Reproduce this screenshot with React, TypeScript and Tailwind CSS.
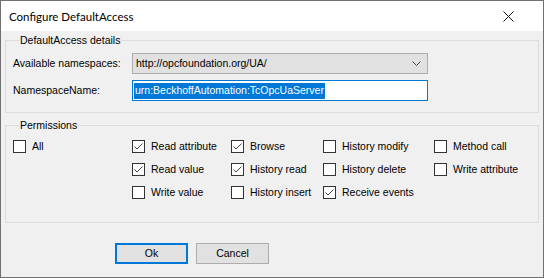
import React from "react";

const perms: { label: string; checked: boolean; col: number; row: number }[] = [
  { label: "All", checked: false, col: 1, row: 1 },
  { label: "Read attribute", checked: true, col: 2, row: 1 },
  { label: "Read value", checked: true, col: 2, row: 2 },
  { label: "Write value", checked: false, col: 2, row: 3 },
  { label: "Browse", checked: true, col: 3, row: 1 },
  { label: "History read", checked: true, col: 3, row: 2 },
  { label: "History insert", checked: false, col: 3, row: 3 },
  { label: "History modify", checked: false, col: 4, row: 1 },
  { label: "History delete", checked: false, col: 4, row: 2 },
  { label: "Receive events", checked: true, col: 4, row: 3 },
  { label: "Method call", checked: false, col: 5, row: 1 },
  { label: "Write attribute", checked: false, col: 5, row: 2 },
];

const colClass = ["", "col-start-1", "col-start-2", "col-start-3", "col-start-4", "col-start-5"];
const rowClass = ["", "row-start-1", "row-start-2", "row-start-3"];

function CheckBox({ label, checked }: { label: string; checked: boolean }) {
  return (
    <label className="flex items-center gap-[6px] h-[23px]">
      <span className="w-[13px] h-[13px] border border-[#333333] bg-white flex items-center justify-center">
        {checked && (
          <svg width="11" height="11" viewBox="0 0 11 11">
            <polyline points="1.5,5.5 4,8 9.5,2.5" fill="none" stroke="#444" strokeWidth="1" />
          </svg>
        )}
      </span>
      <span>{label}</span>
    </label>
  );
}

export default function App() {
  return (
    <div
      className="w-[544px] h-[278px] border border-[#707070] flex flex-col text-[10.5px] leading-[13px] text-black"
      style={{ fontFamily: '"Liberation Sans", Arial, sans-serif' }}
    >
      <div className="h-[30px] bg-white flex items-center justify-between pl-[8px] pr-[29px]">
        <span className="text-[11.5px]" style={{ fontFamily: 'Lato, "Noto Sans", sans-serif' }}>
          Configure DefaultAccess
        </span>
        <svg width="11" height="11" viewBox="0 0 11 11">
          <path d="M0.5 0.5 L10.5 10.5 M10.5 0.5 L0.5 10.5" stroke="#111" strokeWidth="1" />
        </svg>
      </div>

      <div className="flex-1 bg-[#f0f0f0] px-[4px] flex flex-col">
        <fieldset className="mt-[3px] border border-[#dcdcdc] pl-[7px] pr-[6px] pt-[6px] pb-[11px]">
          <legend className="ml-[6px] px-[1px] leading-[13px]">DefaultAccess details</legend>
          <div className="flex flex-col gap-[6px]">
            <div className="flex items-center h-[21px]">
              <span className="w-[119px]">Available namespaces:</span>
              <div className="w-[296px] h-[21px] border border-[#adadad] bg-[#e1e1e1] flex items-center justify-between pl-[3px] pr-[6px]">
                <span>http://opcfoundation.org/UA/</span>
                <svg width="9" height="5" viewBox="0 0 9 5">
                  <polyline points="0.5,0.5 4.5,4.5 8.5,0.5" fill="none" stroke="#444" strokeWidth="1" />
                </svg>
              </div>
            </div>
            <div className="flex items-center h-[21px]">
              <span className="w-[119px]">NamespaceName:</span>
              <div className="w-[296px] h-[21px] border border-[#0078d7] bg-white flex items-center pl-[1px]">
                <span className="bg-[#0078d7] text-white h-[16px] flex items-center pl-[1px] pr-[1px]">
                  urn:BeckhoffAutomation:TcOpcUaServer
                </span>
              </div>
            </div>
          </div>
        </fieldset>

        <fieldset className="mt-[6px] border border-[#dcdcdc] pl-[7px] pt-[3px] pb-[18px]">
          <legend className="ml-[6px] px-[1px] leading-[13px]">Permissions</legend>
          <div className="grid grid-cols-[119px_99px_92px_111px_1fr] grid-rows-[23px_23px_23px]">
            {perms.map((p) => (
              <div key={p.label} className={`${colClass[p.col]} ${rowClass[p.row]}`}>
                <CheckBox label={p.label} checked={p.checked} />
              </div>
            ))}
          </div>
        </fieldset>

        <div className="mt-[20px] ml-[110px] flex gap-[8px]">
          <button className="w-[73px] h-[21px] border-2 border-[#0078d7] bg-[#e1e1e1] flex items-center justify-center">
            Ok
          </button>
          <button className="w-[73px] h-[21px] border border-[#adadad] bg-[#e1e1e1] flex items-center justify-center">
            Cancel
          </button>
        </div>
      </div>
    </div>
  );
}
